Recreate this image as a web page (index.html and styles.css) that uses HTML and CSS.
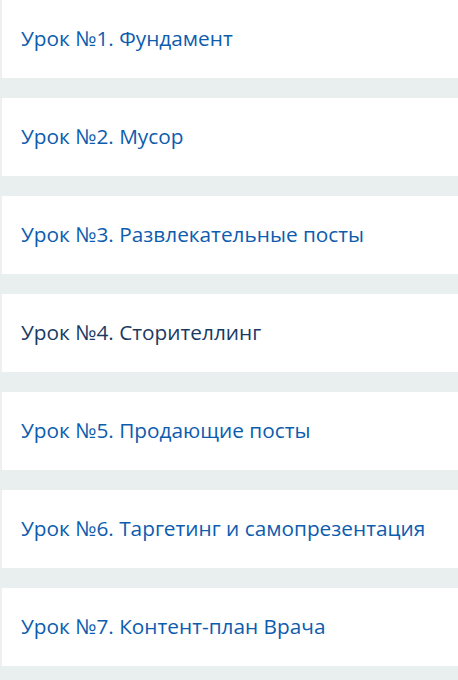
FILE: index.html
```html
<!DOCTYPE html>
<html lang="ru">

<head>
    <meta charset="UTF-8">
    <meta name="viewport" content="width=device-width, initial-scale=1.0">
    <title>Уроки</title>
    <link rel="stylesheet" href="styles.css">
</head>

<body>
    <div class="lessons">
        <a class="lesson" href="#">Урок №1. Фундамент</a>
        <a class="lesson" href="#">Урок №2. Мусор</a>
        <a class="lesson" href="#">Урок №3. Развлекательные посты</a>
        <a class="lesson lesson-active" href="#">Урок №4. Сторителлинг</a>
        <a class="lesson" href="#">Урок №5. Продающие посты</a>
        <a class="lesson" href="#">Урок №6. Таргетинг и самопрезентация</a>
        <a class="lesson" href="#">Урок №7. Контент-план Врача</a>
    </div>
</body>

</html>
```

FILE: styles.css
```css
body {
    margin: 0;
    font-family: "Open Sans", Arial, sans-serif;
    background-color: #e9eeee;
}

.lessons {
    display: flex;
    flex-direction: column;
    gap: 20px;
}

.lesson {
    display: flex;
    align-items: center;
    height: 78px;
    padding-left: 19px;
    padding-bottom: 2px;
    box-sizing: border-box;
    background-color: #fff;
    border-left: 2px solid #eef0f0;
    color: #0d5cae;
    font-size: 20.8px;
    text-decoration: none;
}

.lesson-active {
    color: #1a3a63;
}
```
